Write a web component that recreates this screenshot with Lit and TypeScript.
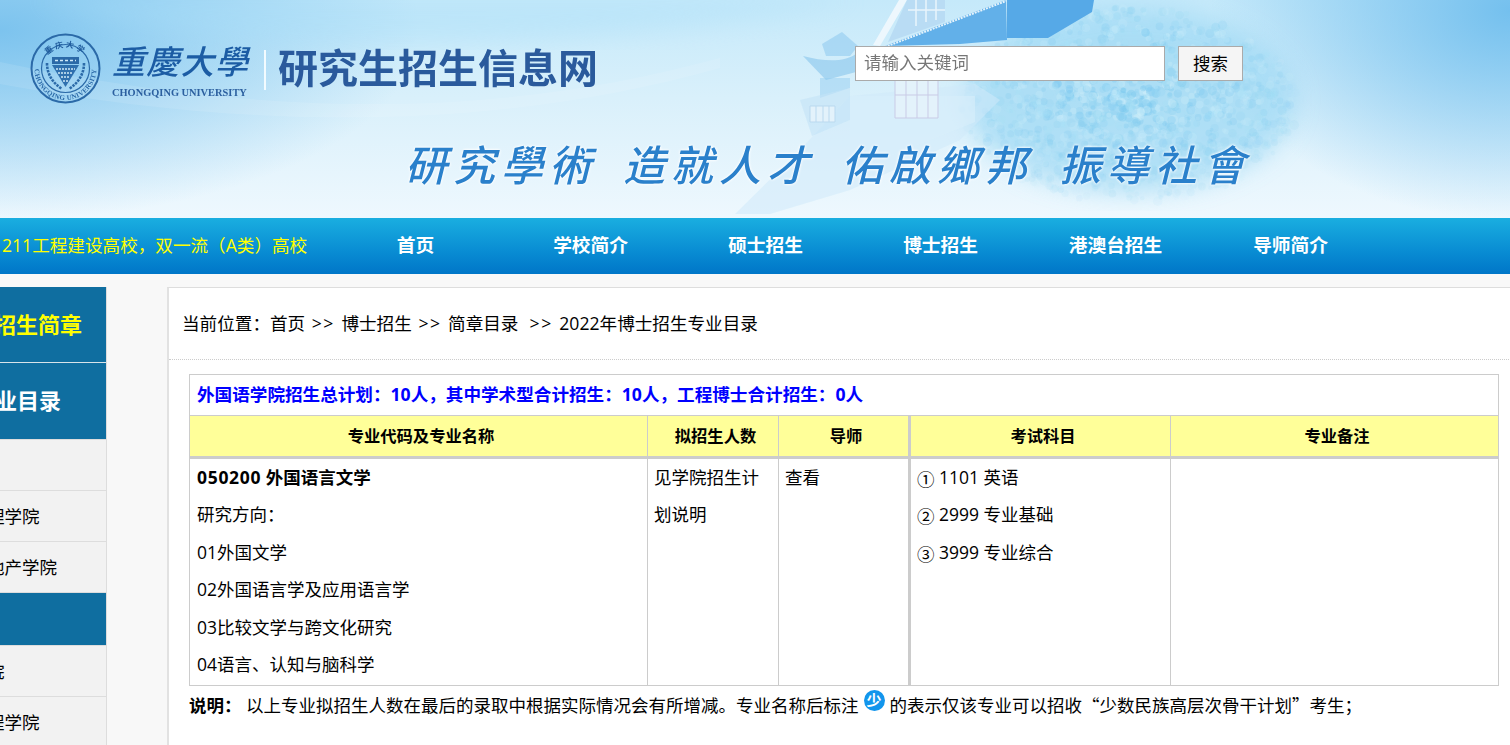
import { LitElement, css, html, svg } from "lit";
import { customElement } from "lit/decorators.js";

const NAV = ["首页", "学校简介", "硕士招生", "博士招生", "港澳台招生", "导师简介"];

type SideItem = { label: string; kind: "gold" | "head" | "plain" | "band" };

// the page is scrolled sideways in the reference, so most of these labels are cut off on the left
const SIDE: SideItem[] = [
  { label: "博士招生简章", kind: "gold" },
  { label: "博士专业目录", kind: "head" },
  { label: "外国语学院", kind: "plain" },
  { label: "经济与工商管理学院", kind: "plain" },
  { label: "建设管理与房地产学院", kind: "plain" },
  { label: "学部", kind: "band" },
  { label: "马克思主义学院", kind: "plain" },
  { label: "材料科学与工程学院", kind: "plain" },
];

const DIRECTIONS = [
  "研究方向：",
  "01外国文学",
  "02外国语言学及应用语言学",
  "03比较文学与跨文化研究",
  "04语言、认知与脑科学",
];

const EXAMS = [
  { mark: "①", text: "1101 英语" },
  { mark: "②", text: "2999 专业基础" },
  { mark: "③", text: "3999 专业综合" },
];

const SLOGAN = ["研究學術", "造就人才", "佑啟鄉邦", "振導社會"];

// simple repeatable scatter for the tree foliage in the banner art
function foliage() {
  const out = [];
  let seed = 11;
  const rnd = () => {
    seed = (seed * 16807) % 2147483647;
    return seed / 2147483647;
  };
  const colors = ["#7cc8ee", "#a8dff6", "#cdeefa", "#92d3f1"];
  for (let i = 0; i < 1500; i++) {
    const a = rnd() * Math.PI * 2;
    const r = Math.pow(rnd(), 0.7);
    const x = 1130 + Math.cos(a) * r * 168;
    const y = 105 + Math.sin(a) * r * 98;
    const alpha = (0.6 - (y / 218) * 0.4) * (1 - r * 0.7);
    out.push(
      svg`<circle cx=${x.toFixed(1)} cy=${y.toFixed(1)} r=${(2 + rnd() * 3).toFixed(1)} fill=${colors[i % 4]} opacity=${alpha.toFixed(2)}></circle>`
    );
  }
  return out;
}

@customElement("app-root")
export class AppRoot extends LitElement {
  static styles = css`
    :host {
      display: block;
      height: 745px;
      overflow: hidden;
      background: #f8f8f8;
      color: #000;
      font-family: "Open Sans", "Noto Sans CJK SC", "Liberation Sans", sans-serif;
      font-size: 17.5px;
    }

    .cjk {
      font-family: "Noto Sans CJK SC", sans-serif;
    }

    .banner {
      position: relative;
      height: 218px;
      overflow: hidden;
      background:
        radial-gradient(ellipse 420px 190px at 0 30px, #7cc3ee 0%, rgba(124, 195, 238, 0) 100%),
        radial-gradient(ellipse 300px 210px at 100% 10px, #74c0ee 0%, rgba(116, 192, 238, 0) 100%),
        linear-gradient(180deg, #c5e9fa 0%, #d9f0fb 45%, #eef8fe 100%);
    }

    .art {
      position: absolute;
      inset: 0;
      width: 1510px;
      height: 218px;
    }

    .top {
      position: relative;
      display: flex;
      align-items: flex-start;
      height: 135px;
      padding-left: 30px;
    }

    .seal {
      width: 71px;
      height: 71px;
      margin-top: 33px;
      flex: none;
    }

    .school {
      width: 136px;
      margin: 34px 0 0 11px;
      color: #1c5ca4;
    }

    .school-cn {
      display: flex;
      justify-content: space-between;
      height: 52px;
      font-family: "Noto Sans CJK SC", sans-serif;
      font-size: 33px;
      line-height: 52px;
      font-weight: 500;
      font-style: italic;
    }

    .school-en {
      font-family: "Liberation Serif", serif;
      font-size: 10.4px;
      line-height: 13px;
      font-weight: 700;
      color: #2b5f9f;
      white-space: nowrap;
    }

    .divider {
      width: 2px;
      height: 40px;
      margin: 50px 12px 0 16px;
      background: #f2fbff;
    }

    .site-name {
      width: 320px;
      margin-top: 42px;
      font-family: "Noto Sans CJK SC", sans-serif;
      font-size: 40px;
      line-height: 48px;
      font-weight: 700;
      color: #2a5a9c;
    }

    .search {
      display: flex;
      gap: 13px;
      margin: 46px 0 0 257px;
    }

    .search input {
      box-sizing: border-box;
      width: 310px;
      height: 35px;
      padding: 0 8px 3px;
      border: 1px solid #aaa;
      background: #fff;
      font: inherit;
      outline: none;
    }

    .search input::placeholder {
      color: #777;
    }

    .search button {
      box-sizing: border-box;
      width: 65px;
      height: 35px;
      padding: 0 0 3px;
      border: 1px solid #aaa;
      background: #f5f5f5;
      color: #000;
      font: inherit;
    }

    .slogan {
      position: relative;
      display: flex;
      gap: 22px;
      padding-left: 405px;
      font-family: "Noto Sans CJK SC", sans-serif;
      font-size: 42px;
      line-height: 56px;
      font-weight: 500;
      font-style: italic;
      color: #2a80cb;
      text-shadow: 0 0 3px #fff, 0 0 3px #fff;
    }

    .slogan span {
      width: 196px;
      white-space: nowrap;
      letter-spacing: 6px;
    }

    .nav {
      display: flex;
      height: 56px;
      background: linear-gradient(180deg, #1aaee0 0%, #0a8fd4 55%, #0076c8 100%);
      line-height: 54px;
    }

    .ticker {
      width: 328px;
      flex: none;
      padding-left: 2px;
      box-sizing: border-box;
      font-size: 17.6px;
      color: #ffff00;
      white-space: nowrap;
      overflow: hidden;
    }

    .nav a {
      width: 175px;
      flex: none;
      text-align: center;
      font-size: 18.7px;
      font-weight: 700;
      color: #fff;
    }

    .content {
      display: grid;
      grid-template-columns: 107px 1fr;
      column-gap: 60px;
      padding-top: 13px;
    }

    .side {
      overflow: hidden;
      border-right: 1px solid #ddd;
      height: 458px;
    }

    .side-item {
      box-sizing: border-box;
      width: 228px;
      margin-left: -122px;
      padding-left: 4px;
      white-space: nowrap;
      height: 51px;
      line-height: 51px;
      background: #f2f2f2;
      border-bottom: 1px solid #ddd;
    }

    .side-item.gold,
    .side-item.head {
      padding-left: 0;
      padding-right: 24px;
      text-align: right;
      font-size: 22px;
      font-weight: 700;
      background: #0f6ea0;
      color: #fff;
    }

    .side-item.gold {
      height: 76px;
      line-height: 74px;
      padding-right: 24px;
      color: #ffff00;
      border-bottom-color: #d8e4ea;
    }

    .side-item.head {
      height: 77px;
      line-height: 75px;
      padding-right: 45px;
    }

    .side-item.band {
      height: 53px;
      background: #0f6ea0;
      color: #0f6ea0;
    }

    .main {
      min-height: 458px;
      background: #fff;
      border-top: 1px solid #ddd;
      border-left: 2px solid #e2e2e2;
    }

    .crumbs {
      height: 71px;
      padding-left: 13px;
      font-size: 17.6px;
      line-height: 70px;
      white-space: pre;
      border-bottom: 1px dotted #ccc;
    }

    .sep {
      margin: 0 2px;
      letter-spacing: 1.5px;
    }

    .body {
      padding: 14px 12px 0 20px;
    }

    table {
      width: 1309px;
      table-layout: fixed;
      border-collapse: collapse;
      border: 1px solid #ccc;
    }

    td,
    th {
      padding: 0 6px;
      border: 1px solid #ccc;
      vertical-align: top;
      text-align: left;
      font-weight: 400;
    }

    .first {
      padding-left: 7px;
    }

    .plan {
      height: 40px;
      padding-left: 7px;
      font-size: 17.6px;
      line-height: 38px;
      font-weight: 700;
      color: #0000ff;
    }

    th {
      height: 40px;
      padding: 0 2px 0 7px;
      border-bottom-width: 3px;
      background: #ffff99;
      font-size: 16.3px;
      font-weight: 700;
      line-height: 40px;
      text-align: center;
    }

    tbody td {
      height: 226px;
      line-height: 37.4px;
    }

    .exam {
      border-left-width: 3px;
    }

    .line {
      display: block;
      height: 37.4px;
    }

    .major {
      font-weight: 700;
    }

    .code {
      letter-spacing: 0.7px;
    }

    .circled {
      position: relative;
      top: 2px;
      display: inline-block;
      width: 22px;
      line-height: 1;
    }

    .note {
      display: flex;
      align-items: center;
      height: 36px;
      white-space: pre;
    }

    .note b {
      width: 57px;
      flex: none;
    }

    .mark {
      display: inline-block;
      flex: none;
      width: 21px;
      height: 21px;
      margin: -8px 5px 0 5px;
      border-radius: 50%;
      background: #1295ec;
      color: #fff;
      font-family: "Noto Sans CJK SC", sans-serif;
      font-size: 15px;
      font-weight: 700;
      line-height: 20px;
      text-align: center;
    }
  `;

  private renderArt() {
    return html`<svg class="art" viewBox="0 0 1510 218" aria-hidden="true">
      <defs>
        <filter id="soft"><feGaussianBlur stdDeviation="0.7"></feGaussianBlur></filter>
        <filter id="wide"><feGaussianBlur stdDeviation="12"></feGaussianBlur></filter>
      </defs>
      <path d="M30 0 C230 62 560 58 860 0 Z" fill="#a9def8" opacity="0.4" filter="url(#wide)"></path>
      <path d="M0 62 C300 125 520 112 720 58 L720 68 C500 130 260 132 0 84 Z" fill="#fff" opacity="0.1"></path>
      <ellipse cx="1130" cy="100" rx="165" ry="92" fill="#9fd9f4" opacity="0.75" filter="url(#wide)"></ellipse>
      <g filter="url(#soft)">${foliage()}</g>

      <g filter="url(#soft)">
        <!-- main hall -->
        <path d="M850 96 L975 84 L1000 100 L960 140 L850 190 L770 214 L735 214 L800 150 Z" fill="#cfe9f9" opacity="0.55"></path>
        <path d="M850 96 H975 V122 L850 172 Z" fill="#d8eefa" opacity="0.6"></path>
        <path d="M895 80 H938 V118 H895 Z M906 80 V118 M917 80 V118 M928 80 V118 M895 95 H938" fill="#e3f2fb" stroke="#c9cbe6"></path>
        <path d="M885 46 L1006 0 L1007 40 L960 44 Z" fill="#62b0e9"></path>
        <path d="M1007 0 H1094 L1092 12 L1048 38 H1007 Z" fill="#56a9e7"></path>
        <path d="M899 0 L873 45 L880 46 L907 0 Z" fill="#edf7fd"></path>
        <path d="M907 0 H945 V22 L888 42 Z" fill="#b9dcf4"></path>
        <path d="M916 0 V26 M926 0 V22 M936 0 V20 M908 10 H945" stroke="#e9f5fc" stroke-width="1.500"></path>
        <path d="M885 47 L1006 1" stroke="#e4f3fc" stroke-width="2" stroke-dasharray="2 1"></path>

        <!-- small pavilion on the left -->
        <path d="M822 44 L842 32 L858 46 L850 56 H826 Z" fill="#8cc8ee" opacity="0.55"></path>
        <path d="M803 56 C825 62 845 62 856 54 L856 72 L826 80 Z" fill="#79bdea" opacity="0.5"></path>
        <path d="M820 78 H850 V88 L820 98 Z" fill="#8fcaef" opacity="0.45"></path>
        <path d="M800 100 L850 88 L850 120 L812 136 Z" fill="#c3e3f7" opacity="0.6"></path>
        <path d="M810 106 H835 V122 H810 Z M816 106 V122 M823 106 V122 M829 106 V122" fill="#e3f2fb" stroke="#bad9ef"></path>
      </g>
    </svg>`;
  }

  private renderSeal() {
    return html`<svg class="seal" viewBox="0 0 71 71" aria-label="校徽">
      <defs>
        <path id="ring-top" d="M13 30 A24 24 0 0 1 58 30"></path>
        <path id="ring-bottom" d="M4.500 36 A31 31 0 0 0 66.500 36"></path>
      </defs>
      <circle cx="35.500" cy="35.500" r="34" fill="none" stroke="#2b6aa8" stroke-width="2"></circle>
      <circle cx="35.500" cy="35.500" r="24" fill="none" stroke="#2b6aa8" stroke-width="1.200"></circle>
      <text font-family="Noto Sans CJK SC" font-size="8" font-weight="700" fill="#1f5b9c" text-anchor="middle" letter-spacing="2">
        <textPath href="#ring-top" startOffset="50%">重庆大学</textPath>
      </text>
      <text font-family="Liberation Serif" font-size="7" font-weight="700" fill="#2b6aa8" text-anchor="middle" letter-spacing="0.300">
        <textPath href="#ring-bottom" startOffset="50%">CHONGQING UNIVERSITY</textPath>
      </text>
      <path d="M22 24 H49 V31 H22 Z" fill="#2b6aa8"></path>
      <path d="M25 27.500 H46" stroke="#cfe9f8" stroke-width="1.600" stroke-dasharray="3 2"></path>
      <path d="M22 32 H49 L35.500 54 Z" fill="#2f70ae"></path>
      <path d="M26 36 H45 M28 40 H43 M31 44 H40 M33 48 H38" stroke="#cfe9f8" stroke-width="1.600" stroke-dasharray="2 1"></path>
      <path d="M17 30 Q17 46 32 56 M54 30 Q54 46 39 56" fill="none" stroke="#2b6aa8" stroke-width="2.600" stroke-dasharray="2.500 1"></path>
    </svg>`;
  }

  protected render() {
    return html`
      <header class="banner">
        ${this.renderArt()}
        <div class="top">
          ${this.renderSeal()}
          <div class="school">
            <div class="school-cn"><span>重</span><span>慶</span><span>大</span><span>學</span></div>
            <div class="school-en">CHONGQING UNIVERSITY</div>
          </div>
          <div class="divider"></div>
          <div class="site-name">研究生招生信息网</div>
          <div class="search">
            <input placeholder="请输入关键词" />
            <button>搜索</button>
          </div>
        </div>
        <div class="slogan">${SLOGAN.map((part) => html`<span>${part}</span>`)}</div>
      </header>

      <nav class="nav">
        <div class="ticker">211工程建设高校，双一流（A类）高校</div>
        ${NAV.map((item) => html`<a>${item}</a>`)}
      </nav>

      <div class="content">
        <aside class="side">
          ${SIDE.map((item) => html`<div class="side-item ${item.kind}">${item.label}</div>`)}
        </aside>

        <main class="main">
          <div class="crumbs">当前位置：首页 <span class="sep">&gt;&gt;</span> 博士招生 <span class="sep">&gt;&gt;</span> 简章目录  <span class="sep">&gt;&gt;</span> 2022年博士招生专业目录</div>
          <div class="body">
            <table>
              <colgroup>
                <col style="width: 458px" />
                <col style="width: 131px" />
                <col style="width: 131px" />
                <col style="width: 261px" />
                <col style="width: 328px" />
              </colgroup>
              <thead>
                <tr>
                  <td class="plan" colspan="5">外国语学院招生总计划：10人，其中学术型合计招生：10人，工程博士合计招生：0人</td>
                </tr>
                <tr>
                  <th>专业代码及专业名称</th>
                  <th>拟招生人数</th>
                  <th>导师</th>
                  <th class="exam">考试科目</th>
                  <th>专业备注</th>
                </tr>
              </thead>
              <tbody>
                <tr>
                  <td class="first">
                    <span class="line major"><span class="code">050200</span> 外国语言文学</span>
                    ${DIRECTIONS.map((d) => html`<span class="line">${d}</span>`)}
                  </td>
                  <td>见学院招生计划说明</td>
                  <td>查看</td>
                  <td class="exam">
                    ${EXAMS.map((e) => html`<span class="line"><span class="circled cjk">${e.mark}</span>${e.text}</span>`)}
                  </td>
                  <td></td>
                </tr>
              </tbody>
            </table>
            <div class="note"><b>说明：</b><span>以上专业拟招生人数在最后的录取中根据实际情况会有所增减。专业名称后标注</span><span class="mark">少</span><span>的表示仅该专业可以招收<span class="cjk">“</span>少数民族高层次骨干计划<span class="cjk">”</span>考生；</span></div>
          </div>
        </main>
      </div>
    `;
  }
}
